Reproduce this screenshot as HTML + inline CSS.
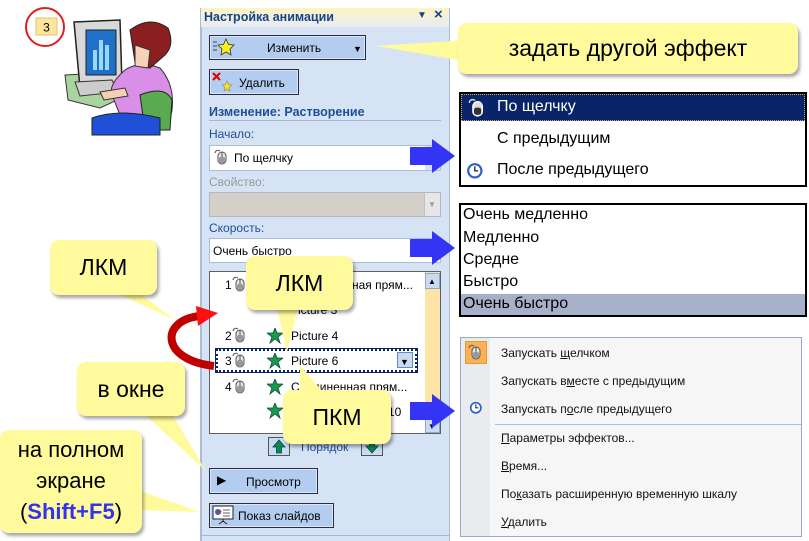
<!DOCTYPE html>
<html><head><meta charset="utf-8">
<style>
*{margin:0;padding:0;box-sizing:border-box}
body{width:809px;height:541px;position:relative;background:#fff;overflow:hidden;font-family:"Liberation Sans","DejaVu Sans",sans-serif}
.a{position:absolute}
.t{position:absolute;white-space:nowrap;font-size:12px;color:#000;line-height:14px}
.btn{position:absolute;background:#b3cdf0;border:1px solid #2a2a40;box-shadow:inset 0 0 0 1px #dbe7f8}
.lbl{color:#1f4e99}
.call{position:absolute;background:#fffb9c;border-radius:9px;box-shadow:2px 3px 3px rgba(0,0,0,.35);font-size:23px;color:#000;text-align:center}
.m{position:absolute;left:501px;font-size:12px;white-space:nowrap;color:#111}
.d{position:absolute;left:463px;font-size:16px;white-space:nowrap}
</style></head><body>

<svg width="0" height="0" style="position:absolute">
<defs>
<g id="mouse"><path d="M1 4 Q2 0 6 2" fill="none" stroke="#666" stroke-width="1.2"/><rect x="4" y="3" width="8" height="12" rx="4" fill="#e4e4e4" stroke="#555"/><line x1="8" y1="3" x2="8" y2="8" stroke="#555"/><rect x="5" y="8" width="6" height="6" rx="2" fill="#999"/></g>
<g id="clock"><circle cx="8" cy="8" r="7" fill="#2f5fc8"/><circle cx="8" cy="8" r="5" fill="#fff"/><path d="M8 4 V8 H11" stroke="#234" stroke-width="1.3" fill="none"/></g>
<g id="star"><path d="M8 0 L10 5 L16 5 L11 9 L13 15 L8 11 L3 15 L5 9 L0 5 L6 5Z" fill="#1a9a50" stroke="#0c4a28" stroke-width=".8"/></g>
</defs>
</svg>

<!-- clipart -->
<svg class="a" style="left:0;top:0" width="200" height="140">
<circle cx="45" cy="27" r="19" fill="#fff" stroke="#e02020" stroke-width="2"/>
<rect x="36" y="18" width="21" height="17" fill="#fde59a" stroke="#e8c070"/>
<text x="46.5" y="31.5" font-size="12" text-anchor="middle" font-family="Liberation Sans">3</text>
<path d="M65 75 L120 72 L128 95 L100 108 L68 100 Z" fill="#a8d4a0" stroke="#333"/>
<path d="M74 22 L120 20 L122 85 L80 88 Z" fill="#d8d8d8" stroke="#222" stroke-width="1.5"/>
<rect x="86" y="30" width="30" height="45" fill="#1e70c8" stroke="#222"/>
<rect x="93" y="50" width="4" height="20" fill="#9bd8f8"/><rect x="99" y="40" width="4" height="30" fill="#9bd8f8"/><rect x="105" y="45" width="4" height="25" fill="#9bd8f8"/>
<path d="M75 82 L112 80 L118 92 L80 96 Z" fill="#ccc" stroke="#333"/>
<path d="M125 70 Q140 60 160 68 Q175 85 172 110 L170 120 L120 115 L112 95 Q108 85 125 70Z" fill="#d98ee8" stroke="#333"/>
<path d="M100 92 L125 88 L128 96 L104 100Z" fill="#f5d0b0" stroke="#333"/>
<path d="M130 30 Q150 15 168 28 Q175 45 165 55 L150 68 L135 62 Z" fill="#8b1e1e" stroke="#222"/>
<path d="M135 45 L150 50 L148 68 L135 66Z" fill="#f6d2b8" stroke="#333"/>
<path d="M140 95 Q165 85 172 100 L170 130 L145 130Z" fill="#5aaa50" stroke="#222"/>
<path d="M92 118 Q120 108 160 118 L160 135 L92 135Z" fill="#2050d8" stroke="#222"/>
</svg>

<!-- panel -->
<div class="a" style="left:200px;top:8px;width:250px;height:533px;background:#d5e3f5;border-left:2px solid #a9bcd8;border-right:1px solid #a9bcd8"></div>
<div class="a" style="left:201px;top:8px;width:248px;height:19px;background:linear-gradient(#fdf4c4,#e9ecf4)"></div>
<div class="t" style="left:204px;top:10px;font-weight:bold;color:#15428b;font-size:12.5px">Настройка анимации</div>
<div class="t" style="left:417px;top:9px;font-size:10px;color:#15428b">▼</div>
<div class="t" style="left:434px;top:8px;font-size:15px;color:#15428b;font-weight:bold">×</div>

<div class="btn" style="left:209px;top:35px;width:157px;height:25px"></div>
<svg class="a" style="left:213px;top:38px" width="22" height="18"><g stroke="#444"><line x1="0" y1="4" x2="4" y2="4"/><line x1="0" y1="8" x2="4" y2="8"/><line x1="0" y1="12" x2="4" y2="12"/></g><path d="M13 1 L15.5 6.5 L21 7 L17 11 L18 17 L13 14 L8 17 L9 11 L5 7 L10.5 6.5Z" fill="#f8f020" stroke="#333" stroke-width=".8"/></svg>
<div class="t" style="left:267px;top:41px">Изменить</div>
<div class="t" style="left:353px;top:42px;font-size:9px">▼</div>

<div class="btn" style="left:209px;top:69px;width:90px;height:26px"></div>
<svg class="a" style="left:212px;top:72px" width="22" height="20"><path d="M1 1 L8 8 M8 1 L1 8" stroke="#d00" stroke-width="2"/><path d="M15 9 L16.5 12.5 L20 13 L17.5 15 L18 19 L15 17 L12 19 L12.5 15 L10 13 L13.5 12.5Z" fill="#f8e020" stroke="#886" stroke-width=".6"/></svg>
<div class="t" style="left:239px;top:76px">Удалить</div>

<div class="t" style="left:209px;top:105px;font-weight:bold;color:#1f4e99;font-size:12.5px">Изменение: Растворение</div>
<div class="a" style="left:209px;top:120px;width:232px;height:1px;background:#9db8dd"></div>

<div class="t lbl" style="left:209px;top:127px">Начало:</div>
<div class="a" style="left:209px;top:145px;width:232px;height:26px;background:#fff;border:1px solid #a9bcd8"></div>
<div class="a" style="left:425px;top:146px;width:15px;height:24px;background:#d5e3f5"></div>
<svg class="a" style="left:214px;top:149px" width="16" height="17"><use href="#mouse"/></svg>
<div class="t" style="left:234px;top:151px">По щелчку</div>

<div class="t" style="left:209px;top:175px;color:#9a9a9a">Свойство:</div>
<div class="a" style="left:209px;top:192px;width:232px;height:25px;background:#d4d0c8;border:1px solid #b0b8c4"></div>
<div class="a" style="left:424px;top:193px;width:16px;height:23px;background:#e6e6e6;border-left:1px solid #c0c0c0"></div>
<div class="t" style="left:428px;top:198px;font-size:8px;color:#999">▼</div>

<div class="t lbl" style="left:209px;top:221px">Скорость:</div>
<div class="a" style="left:209px;top:238px;width:232px;height:25px;background:#fff;border:1px solid #a9bcd8"></div>
<div class="t" style="left:213px;top:244px">Очень быстро</div>

<!-- list -->
<div class="a" style="left:209px;top:271px;width:232px;height:163px;background:#fff;border:1px solid #606060"></div>
<div class="a" style="left:425px;top:272px;width:15px;height:161px;background:#fde3a6"></div>
<div class="a" style="left:425px;top:273px;width:15px;height:16px;background:#c9daf2;border:1px solid #8ea8d0"></div>
<div class="t" style="left:428px;top:275px;font-size:8px">▲</div>
<div class="a" style="left:425px;top:416px;width:15px;height:17px;background:#c9daf2;border:1px solid #8ea8d0"></div>
<div class="t" style="left:428px;top:420px;font-size:8px">▼</div>
<div class="t" style="left:225px;top:278px">1</div><svg class="a" style="left:232px;top:276px" width="16" height="17"><use href="#mouse"/></svg>
<div class="t" style="left:352px;top:278px">ная прям...</div>
<div class="t" style="left:290px;top:303px">Picture 3</div>
<div class="t" style="left:225px;top:329px">2</div><svg class="a" style="left:232px;top:327px" width="16" height="17"><use href="#mouse"/></svg>
<svg class="a" style="left:267px;top:328px" width="16" height="16"><use href="#star"/></svg>
<div class="t" style="left:291px;top:329px">Picture 4</div>
<div class="a" style="left:216px;top:349px;width:201px;height:23px;border:2px dotted #0a246a;outline:1px solid #0a246a"></div>
<div class="t" style="left:225px;top:354px">3</div><svg class="a" style="left:232px;top:352px" width="16" height="17"><use href="#mouse"/></svg>
<svg class="a" style="left:267px;top:353px" width="16" height="16"><use href="#star"/></svg>
<div class="t" style="left:291px;top:354px">Picture 6</div>
<div class="a" style="left:397px;top:352px;width:16px;height:16px;background:#c9daf2;border:1px solid #6a88b8"></div>
<div class="t" style="left:400px;top:355px;font-size:9px">▼</div>
<div class="t" style="left:225px;top:380px">4</div><svg class="a" style="left:232px;top:378px" width="16" height="17"><use href="#mouse"/></svg>
<svg class="a" style="left:267px;top:379px" width="16" height="16"><use href="#star"/></svg>
<div class="t" style="left:291px;top:380px">Соединенная прям...</div>
<svg class="a" style="left:267px;top:403px" width="16" height="16"><use href="#star"/></svg>
<div class="t" style="left:388px;top:405px">10</div>

<div class="a" style="left:268px;top:437px;width:22px;height:19px;background:#c9daf2;border:1px solid #555"></div>
<svg class="a" style="left:272px;top:439px" width="14" height="15"><path d="M7 1 L13 8 H9.5 V14 H4.5 V8 H1Z" fill="#0a8a50" stroke="#044" stroke-width=".8"/></svg>
<div class="t" style="left:301px;top:440px;color:#1f4e99">Порядок</div>
<div class="a" style="left:361px;top:437px;width:22px;height:19px;background:#c9daf2;border:1px solid #555"></div>
<svg class="a" style="left:365px;top:439px" width="14" height="15"><path d="M7 14 L13 7 H9.5 V1 H4.5 V7 H1Z" fill="#0a8a50" stroke="#044" stroke-width=".8"/></svg>

<div class="btn" style="left:209px;top:468px;width:109px;height:26px"></div>
<div class="t" style="left:217px;top:473px;font-size:12px">▶</div>
<div class="t" style="left:246px;top:475px">Просмотр</div>
<div class="btn" style="left:209px;top:503px;width:125px;height:25px"></div>
<svg class="a" style="left:212px;top:505px" width="22" height="20"><rect x="1" y="1" width="20" height="13" fill="#fff" stroke="#222"/><circle cx="6" cy="7" r="3" fill="#3060d0"/><path d="M6 7 L9 5 A3 3 0 0 1 8 9Z" fill="#e03030"/><g stroke="#666"><line x1="11" y1="5" x2="18" y2="5"/><line x1="11" y1="8" x2="18" y2="8"/><line x1="11" y1="11" x2="18" y2="11"/></g><path d="M11 14 V17 M7 19 L11 16 L15 19" stroke="#222" fill="none"/></svg>
<div class="t" style="left:238px;top:509px">Показ слайдов</div>
<div class="a" style="left:201px;top:535px;width:248px;height:1px;background:#9db8dd"></div>

<!-- dropdown 1 -->
<div class="a" style="left:459px;top:92px;width:348px;height:95px;border:2px solid #000;background:#fff"></div>
<div class="a" style="left:461px;top:94px;width:344px;height:27px;background:#0a246a;border:1px dotted #c8b060"></div>
<svg class="a" style="left:468px;top:98px" width="20" height="20"><g transform="scale(1.2)"><path d="M1 4 Q2 0 6 2" fill="none" stroke="#ddd" stroke-width="1.2"/><rect x="4" y="3" width="8" height="12" rx="4" fill="#ddd" stroke="#fff"/><rect x="5" y="8" width="6" height="6" rx="2" fill="#333"/></g></svg>
<div class="d" style="left:497px;top:98px;color:#fff">По щелчку</div>
<div class="d" style="left:497px;top:130px">С предыдущим</div>
<svg class="a" style="left:466px;top:162px" width="18" height="18"><g transform="scale(1.1)"><use href="#clock"/></g></svg>
<div class="d" style="left:497px;top:161px">После предыдущего</div>

<!-- dropdown 2 -->
<div class="a" style="left:459px;top:203px;width:348px;height:114px;border:2px solid #000;background:#fff"></div>
<div class="a" style="left:461px;top:294px;width:344px;height:21px;background:#a6b0c8"></div>
<div class="d" style="top:206px">Очень медленно</div>
<div class="d" style="top:229px">Медленно</div>
<div class="d" style="top:251px">Средне</div>
<div class="d" style="top:273px">Быстро</div>
<div class="d" style="top:295px">Очень быстро</div>

<!-- context menu -->
<div class="a" style="left:460px;top:337px;width:342px;height:200px;background:#f6f6f6;border:1px solid #97a8c8"></div>
<div class="a" style="left:461px;top:338px;width:29px;height:198px;background:#e9ecee"></div>
<div class="a" style="left:465px;top:341px;width:22px;height:23px;background:#fbb053;border:1px solid #e89a30"></div>
<svg class="a" style="left:468px;top:344px" width="16" height="17"><use href="#mouse"/></svg>
<svg class="a" style="left:469px;top:401px" width="14" height="14"><g transform="scale(.85)"><use href="#clock"/></g></svg>
<div class="a" style="left:495px;top:424px;width:306px;height:1px;background:#a8c0e8"></div>
<div class="m" style="top:346px">Запускать <u>щ</u>елчком</div>
<div class="m" style="top:374px">Запускать в<u>м</u>есте с предыдущим</div>
<div class="m" style="top:402px">Запускать п<u>о</u>сле предыдущего</div>
<div class="m" style="top:431px"><u>П</u>араметры эффектов...</div>
<div class="m" style="top:459px"><u>В</u>ремя...</div>
<div class="m" style="top:487px">По<u>к</u>азать расширенную временную шкалу</div>
<div class="m" style="top:515px"><u>У</u>далить</div>

<!-- arrows and callout tails -->
<svg class="a" style="left:0;top:0" width="809" height="541">
<g fill="#3434f4">
<path d="M410 147 H432 V139 L455 156 L432 173 V165 H410Z"/>
<path d="M410 239 H432 V231 L455 248 L432 265 V257 H410Z"/>
<path d="M410 402 H432 V394 L455 411 L432 428 V420 H410Z"/>
</g>
<path d="M214 366 C160 360 160 320 200 316" fill="none" stroke="#c00000" stroke-width="8"/>
<path d="M196 306 L218 313 L198 326Z" fill="#ff1010"/>
<g fill="#fffb9c">
<path d="M470 40 L376 46 L470 62Z"/>
<path d="M110 290 L175 320 L135 290Z"/>
<path d="M275 300 L287 352 L300 300Z"/>
<path d="M300 400 L300 365 L330 400Z"/>
<path d="M140 410 L205 470 L170 410Z"/>
<path d="M138 490 L200 512 L138 510Z"/>
</g>
</svg>

<div class="call" style="left:458px;top:23px;width:340px;height:51px;line-height:51px">задать другой эффект</div>
<div class="call" style="left:50px;top:240px;width:107px;height:55px;line-height:55px">ЛКМ</div>
<div class="call" style="left:246px;top:256px;width:107px;height:54px;line-height:54px">ЛКМ</div>
<div class="call" style="left:283px;top:390px;width:108px;height:54px;line-height:54px">ПКМ</div>
<div class="call" style="left:77px;top:362px;width:108px;height:54px;line-height:54px">в окне</div>
<div class="call" style="left:0px;top:430px;width:142px;height:103px;line-height:31px;padding-top:4px;font-size:22px">на полном<br>экране<br>(<b style="color:#3333ee">Shift+F5</b>)</div>

</body></html>
